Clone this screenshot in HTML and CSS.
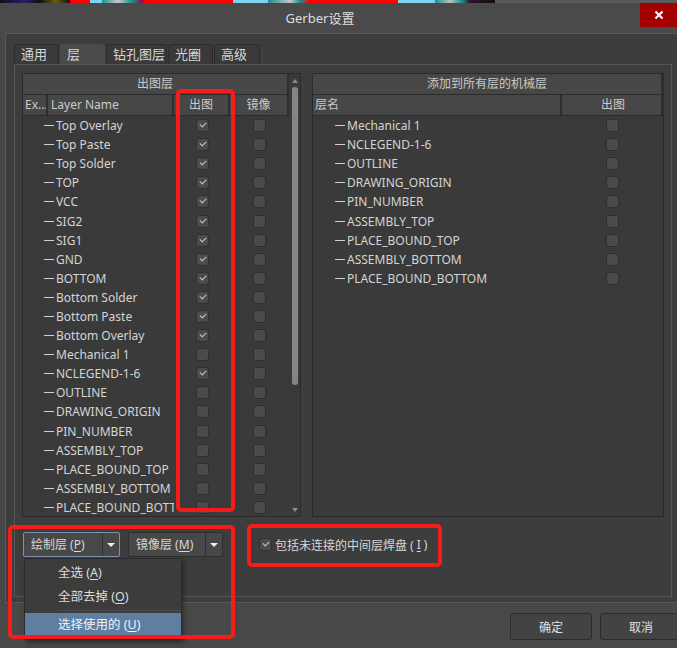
FILE: index.html
```html
<!DOCTYPE html>
<html lang="zh-CN">
<head>
  <meta charset="UTF-8" />
  <title>Gerber设置</title>
  <link rel="stylesheet" href="styles.css">
</head>
<body>
  <div class="desk"></div>
  <div class="titlebar">
    <div class="title">Gerber设置</div>
    <div class="close">
      <svg width="10" height="10" viewBox="0 0 10 10"><path d="M1.5 1.5 L8.5 8.5 M8.5 1.5 L1.5 8.5" stroke="#fff" stroke-width="2.2" fill="none"/></svg>
    </div>
  </div>

  <div class="frame">
    <div class="tabs">
      <div class="tab t1">通用</div>
      <div class="tab t2 active">层</div>
      <div class="tab t3">钻孔图层</div>
      <div class="tab t2">光圈</div>
      <div class="tab t4">高级</div>
    </div>

    <div class="page">
      <div class="tables">
        <!-- 出图层 -->
        <div class="grid left">
          <div class="grid-main">
            <div class="cap">出图层</div>
            <div class="head head-l">
              <span>Ex...</span><span>Layer Name</span><span class="c">出图</span><span class="c">镜像</span>
            </div>
            <div class="row row-l"><span class="name"><i class="dash"></i>Top Overlay</span><span class="c"><b class="cb on"></b></span><span class="c"><b class="cb"></b></span></div>
            <div class="row row-l"><span class="name"><i class="dash"></i>Top Paste</span><span class="c"><b class="cb on"></b></span><span class="c"><b class="cb"></b></span></div>
            <div class="row row-l"><span class="name"><i class="dash"></i>Top Solder</span><span class="c"><b class="cb on"></b></span><span class="c"><b class="cb"></b></span></div>
            <div class="row row-l"><span class="name"><i class="dash"></i>TOP</span><span class="c"><b class="cb on"></b></span><span class="c"><b class="cb"></b></span></div>
            <div class="row row-l"><span class="name"><i class="dash"></i>VCC</span><span class="c"><b class="cb on"></b></span><span class="c"><b class="cb"></b></span></div>
            <div class="row row-l"><span class="name"><i class="dash"></i>SIG2</span><span class="c"><b class="cb on"></b></span><span class="c"><b class="cb"></b></span></div>
            <div class="row row-l"><span class="name"><i class="dash"></i>SIG1</span><span class="c"><b class="cb on"></b></span><span class="c"><b class="cb"></b></span></div>
            <div class="row row-l"><span class="name"><i class="dash"></i>GND</span><span class="c"><b class="cb on"></b></span><span class="c"><b class="cb"></b></span></div>
            <div class="row row-l"><span class="name"><i class="dash"></i>BOTTOM</span><span class="c"><b class="cb on"></b></span><span class="c"><b class="cb"></b></span></div>
            <div class="row row-l"><span class="name"><i class="dash"></i>Bottom Solder</span><span class="c"><b class="cb on"></b></span><span class="c"><b class="cb"></b></span></div>
            <div class="row row-l"><span class="name"><i class="dash"></i>Bottom Paste</span><span class="c"><b class="cb on"></b></span><span class="c"><b class="cb"></b></span></div>
            <div class="row row-l"><span class="name"><i class="dash"></i>Bottom Overlay</span><span class="c"><b class="cb on"></b></span><span class="c"><b class="cb"></b></span></div>
            <div class="row row-l"><span class="name"><i class="dash"></i>Mechanical 1</span><span class="c"><b class="cb"></b></span><span class="c"><b class="cb"></b></span></div>
            <div class="row row-l"><span class="name"><i class="dash"></i>NCLEGEND-1-6</span><span class="c"><b class="cb on"></b></span><span class="c"><b class="cb"></b></span></div>
            <div class="row row-l"><span class="name"><i class="dash"></i>OUTLINE</span><span class="c"><b class="cb"></b></span><span class="c"><b class="cb"></b></span></div>
            <div class="row row-l"><span class="name"><i class="dash"></i>DRAWING_ORIGIN</span><span class="c"><b class="cb"></b></span><span class="c"><b class="cb"></b></span></div>
            <div class="row row-l"><span class="name"><i class="dash"></i>PIN_NUMBER</span><span class="c"><b class="cb"></b></span><span class="c"><b class="cb"></b></span></div>
            <div class="row row-l"><span class="name"><i class="dash"></i>ASSEMBLY_TOP</span><span class="c"><b class="cb"></b></span><span class="c"><b class="cb"></b></span></div>
            <div class="row row-l"><span class="name"><i class="dash"></i>PLACE_BOUND_TOP</span><span class="c"><b class="cb"></b></span><span class="c"><b class="cb"></b></span></div>
            <div class="row row-l"><span class="name"><i class="dash"></i>ASSEMBLY_BOTTOM</span><span class="c"><b class="cb"></b></span><span class="c"><b class="cb"></b></span></div>
            <div class="row row-l"><span class="name"><i class="dash"></i>PLACE_BOUND_BOTT</span><span class="c"><b class="cb"></b></span><span class="c"><b class="cb"></b></span></div>
          </div>
          <div class="vscroll">
            <span class="up"></span>
            <span class="thumb"></span>
            <span class="fill"></span>
            <span class="down"></span>
          </div>
        </div>

        <!-- 机械层 -->
        <div class="grid right">
          <div class="cap">添加到所有层的机械层</div>
          <div class="head head-r">
            <span>层名</span><span class="c">出图</span>
          </div>
          <div class="row row-r"><span class="name"><i class="dash"></i>Mechanical 1</span><span class="c"><b class="cb"></b></span></div>
          <div class="row row-r"><span class="name"><i class="dash"></i>NCLEGEND-1-6</span><span class="c"><b class="cb"></b></span></div>
          <div class="row row-r"><span class="name"><i class="dash"></i>OUTLINE</span><span class="c"><b class="cb"></b></span></div>
          <div class="row row-r"><span class="name"><i class="dash"></i>DRAWING_ORIGIN</span><span class="c"><b class="cb"></b></span></div>
          <div class="row row-r"><span class="name"><i class="dash"></i>PIN_NUMBER</span><span class="c"><b class="cb"></b></span></div>
          <div class="row row-r"><span class="name"><i class="dash"></i>ASSEMBLY_TOP</span><span class="c"><b class="cb"></b></span></div>
          <div class="row row-r"><span class="name"><i class="dash"></i>PLACE_BOUND_TOP</span><span class="c"><b class="cb"></b></span></div>
          <div class="row row-r"><span class="name"><i class="dash"></i>ASSEMBLY_BOTTOM</span><span class="c"><b class="cb"></b></span></div>
          <div class="row row-r"><span class="name"><i class="dash"></i>PLACE_BOUND_BOTTOM</span><span class="c"><b class="cb"></b></span></div>
        </div>
      </div>

      <div class="controls">
        <div class="split focus w1"><span class="label">绘制层 (<u>P</u>)</span><span class="arrow"></span></div>
        <div class="split w2"><span class="label">镜像层 (<u>M</u>)</span><span class="arrow"></span></div>
        <div class="check"><b class="cb on"></b>包括未连接的中间层焊盘 (<u>I</u>)</div>
      </div>
    </div>
  </div>

  <div class="footer">
    <button class="btn">确定</button>
    <button class="btn">取消</button>
  </div>

  <!-- 绘制层 dropdown -->
  <div class="menu">
    <div class="item">全选 (<u>A</u>)</div>
    <div class="item">全部去掉 (<u>O</u>)</div>
    <div class="sep"></div>
    <div class="item hot">选择使用的 (<u>U</u>)</div>
  </div>

  <!-- red annotations -->
  <div class="mark m1"></div>
  <div class="mark m2"></div>
  <div class="mark m3"></div>
</body>
</html>
```

FILE: styles.css
```css
* { box-sizing: border-box; }
html, body { margin: 0; }
body {
  position: relative;
  width: 677px;
  height: 648px;
  overflow: hidden;
  background: #484848;
  font-family: "Noto Sans", "Noto Sans CJK SC", sans-serif;
  font-size: 12px;
  color: #d4d4d4;
}
u { text-decoration: underline; text-underline-offset: 2px; }

/* desktop peeking above the window */
.desk {
  height: 3px;
  background: linear-gradient(to right,
    #14101c 0, #2a1a6a 24px, #101014 40px, #6a5a10 56px, #101010 70px,
    #ff0000 70px, #ff0000 90px, #7fd2f2 90px, #7fd2f2 102px,
    #18908c 102px, #c8c8c8 118px, #18908c 132px, #80104a 142px,
    #ff0000 145px, #ff0000 233px, #7fd2f2 233px, #7fd2f2 268px,
    #18908c 268px, #c8c8c8 290px, #18908c 300px, #ff0000 310px,
    #ff0000 398px, #7fd2f2 398px, #7fd2f2 435px, #18908c 435px,
    #c0c0c0 450px, #18908c 462px, #301030 470px, #101010 495px,
    #5a5a5a 495px);
}

.titlebar {
  display: flex;
  height: 30px;
  background: #4a4a4a;
}
.title {
  flex: 1;
  display: flex;
  align-items: center;
  justify-content: center;
  font-size: 13px;
  color: #dedede;
  padding-bottom: 1px;
}
.close {
  width: 37px;
  height: 24px;
  background: #a30000;
  display: flex;
  align-items: center;
  justify-content: center;
}

.frame {
  margin-left: 5px;
  height: 570px;
  border: 1px solid #585858;
  border-right: 0;
  background: #3d3d3d;
  padding: 10px 0 0 8px;
}

.tabs {
  display: flex;
  gap: 1px;
  height: 20px;
}
.tab {
  height: 20px;
  line-height: 19px;
  padding-left: 6px;
  border: 1px solid #2c2c2c;
  border-bottom: 0;
  border-radius: 3px 3px 0 0;
  background: #393939;
  color: #d6d6d6;
  font-size: 13px;
}
.tab.active { background: #4a4a4a; border-color: #4a4a4a; }
.t1 { width: 45px; }
.t2 { width: 45px; }
.t3 { width: 61px; }
.t4 { width: 46px; }

.page {
  width: 658px;
  height: 533px;
  border: 1px solid #575757;
  padding: 8px 0 0 7px;
}

.tables {
  display: flex;
  gap: 11px;
}
.grid {
  height: 444px;
  border: 1px solid #2b2b2b;
  background: #3a3a3a;
  overflow: hidden;
}
.left { width: 279px; display: flex; }
.right { width: 352px; }
.grid-main { width: 266px; }

.cap {
  height: 21px;
  line-height: 20px;
  text-align: center;
  background: #474747;
  border-bottom: 1px solid #2b2b2b;
  border-right: 2px solid #2e2e2e;
  color: #cacaca;
}

.head {
  display: grid;
  height: 21px;
  line-height: 20px;
  background: #474747;
  border-bottom: 1px solid #2b2b2b;
  color: #cacaca;
}
.head span {
  border-right: 2px solid #2e2e2e;
  padding-left: 2px;
  white-space: nowrap;
  overflow: hidden;
}
.head span:nth-child(2) { padding-left: 3px; }
.head .c { padding-left: 0; text-align: center; display: block; }
.head-l { grid-template-columns: 25px 126px 56px 59px; }
.head-r { grid-template-columns: 249px 101px; }
.head-r span:first-child { padding-left: 2px; }

.row {
  display: grid;
  height: 19.1px;
  align-items: center;
}
.row-l { grid-template-columns: 151px 56px 59px; }
.row-r { grid-template-columns: 249px 101px; }
.name {
  display: flex;
  align-items: center;
  padding-left: 21px;
  white-space: nowrap;
  overflow: hidden;
}
.row-r .name { padding-left: 22px; }
.dash {
  flex: none;
  width: 10px;
  height: 1px;
  margin-right: 2px;
  background: #d0d0d0;
}
.c { display: flex; justify-content: center; }

.cb {
  position: relative;
  display: block;
  flex: none;
  width: 13px;
  height: 13px;
  border: 1px solid #2f2f2f;
  border-radius: 3px;
  background: #4b4b4b;
}
.cb.on::after {
  content: "";
  position: absolute;
  left: 3px;
  top: 2px;
  width: 5px;
  height: 3px;
  border-left: 1.5px solid #c9c9c9;
  border-bottom: 1.5px solid #c9c9c9;
  transform: rotate(-45deg);
}

.vscroll {
  width: 11px;
  display: flex;
  flex-direction: column;
  align-items: center;
}
.vscroll .up, .vscroll .down {
  height: 13px;
  display: flex;
  align-items: center;
  justify-content: center;
}
.vscroll .up::before {
  content: "";
  border: 3px solid transparent;
  border-bottom: 4px solid #8a8a8a;
  border-top: 0;
}
.vscroll .down::before {
  content: "";
  border: 3px solid transparent;
  border-top: 4px solid #8a8a8a;
  border-bottom: 0;
}
.thumb {
  width: 6px;
  height: 298px;
  border-radius: 3px;
  background: #858585;
}
.fill { flex: 1; }

.controls {
  display: flex;
  align-items: center;
  height: 25px;
  margin-top: 15px;
  margin-left: 1px;
}
.split {
  display: flex;
  height: 25px;
  border: 1px solid #2e2e2e;
  border-radius: 2px;
  background: #484848;
  margin-right: 8px;
}
.split.focus { border-color: #7893b1; }
.split .label {
  line-height: 23px;
  padding-left: 7px;
  border-right: 1px solid #303030;
  color: #d8d8d8;
}
.w1 .label { width: 79px; }
.w2 .label { width: 77px; }
.split .arrow {
  width: 16px;
  display: flex;
  align-items: center;
  justify-content: center;
}
.split .arrow::before {
  content: "";
  border: 4px solid transparent;
  border-top: 4px solid #eeeeee;
  border-bottom: 0;
}
.check {
  display: flex;
  align-items: center;
  gap: 3px;
  margin-left: 28px;
  color: #d8d8d8;
}

.footer {
  display: flex;
  justify-content: flex-end;
  gap: 8px;
  height: 45px;
  padding-top: 10px;
  margin-right: -5px;
}
.btn {
  width: 82px;
  height: 27px;
  border: 1px solid #2c2c2c;
  border-radius: 3px;
  background: #434343;
  color: #e0e0e0;
  font-family: "Noto Sans", "Noto Sans CJK SC", sans-serif;
  font-size: 12px;
}

.menu {
  position: absolute;
  left: 24px;
  top: 558px;
  width: 158px;
  height: 82px;
  padding: 2px 0;
  background: #3c3c3c;
  border: 1px solid #2a2a2a;
  box-shadow: 2px 3px 4px rgba(0,0,0,0.35);
}
.item {
  height: 24px;
  line-height: 24px;
  padding-left: 33px;
  color: #dcdcdc;
  font-size: 12.5px;
}
.item.hot { background: #5e7fa1; color: #eef2f6; }
.sep {
  height: 1px;
  margin: 1px 0 2px 33px;
  background: #2b2b2b;
  border-bottom: 1px solid #4a4a4a;
}

.mark {
  position: absolute;
  border: 4px solid #f41d17;
  border-radius: 5px;
}
.m1 { left: 176px; top: 89px; width: 59px; height: 423px; }
.m2 { left: 8px; top: 525px; width: 227px; height: 114px; }
.m3 { left: 247px; top: 524px; width: 195px; height: 43px; }
```
